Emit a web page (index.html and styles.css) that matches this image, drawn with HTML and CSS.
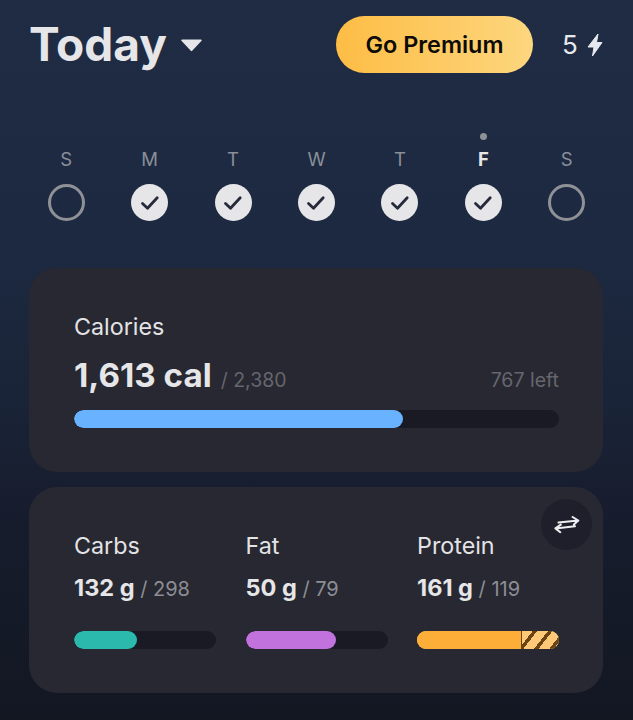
FILE: index.html
```html
<!DOCTYPE html>
<html lang="en">
<head>
<meta charset="utf-8">
<title>Today</title>
<link rel="stylesheet" href="styles.css">
</head>
<body>
<main class="screen">
  <header class="top">
    <div class="title-group">
      <h1 class="title">Today</h1>
      <svg class="caret" width="23" height="14" viewBox="0 0 23 14"><path d="M2 1.5h19a.8.8 0 0 1 .6 1.3l-9.4 10a1 1 0 0 1-1.4 0l-9.4-10A.8.8 0 0 1 2 1.5z" fill="#e6e6e8"/></svg>
    </div>
    <button class="premium">Go Premium</button>
    <div class="streak">
      <span>5</span>
      <svg class="bolt" width="16" height="24" viewBox="0 0 16 24"><path d="M11 1 1 14h6L5.5 23 15 9.5H9.5z" fill="#e6e9ee" stroke="#e6e9ee" stroke-width="1" stroke-linejoin="round"/></svg>
    </div>
  </header>

  <section class="week">
    <div class="day"><i class="today-dot off"></i><span class="letter">S</span><span class="ring"></span></div>
    <div class="day"><i class="today-dot off"></i><span class="letter">M</span><span class="done"><svg width="20" height="16" viewBox="0 0 20 16"><path d="M2.5 8.5 7.5 13.2 17.2 2.8" class="tick"/></svg></span></div>
    <div class="day"><i class="today-dot off"></i><span class="letter">T</span><span class="done"><svg width="20" height="16" viewBox="0 0 20 16"><path d="M2.5 8.5 7.5 13.2 17.2 2.8" class="tick"/></svg></span></div>
    <div class="day"><i class="today-dot off"></i><span class="letter">W</span><span class="done"><svg width="20" height="16" viewBox="0 0 20 16"><path d="M2.5 8.5 7.5 13.2 17.2 2.8" class="tick"/></svg></span></div>
    <div class="day"><i class="today-dot off"></i><span class="letter">T</span><span class="done"><svg width="20" height="16" viewBox="0 0 20 16"><path d="M2.5 8.5 7.5 13.2 17.2 2.8" class="tick"/></svg></span></div>
    <div class="day"><i class="today-dot"></i><span class="letter current">F</span><span class="done"><svg width="20" height="16" viewBox="0 0 20 16"><path d="M2.5 8.5 7.5 13.2 17.2 2.8" class="tick"/></svg></span></div>
    <div class="day"><i class="today-dot off"></i><span class="letter">S</span><span class="ring"></span></div>
  </section>

  <section class="card calories">
    <div class="label">Calories</div>
    <div class="cal-row">
      <div><strong class="cal-value">1,613 cal</strong><span class="cal-goal">/ 2,380</span></div>
      <span class="cal-left">767 left</span>
    </div>
    <div class="track"><div class="fill fill-blue" style="width:67.8%"></div></div>
  </section>

  <section class="card macros">
    <button class="swap" aria-label="Switch view">
      <svg width="26" height="18" viewBox="0 0 26 18" fill="none" stroke="#eceef0" stroke-width="2" stroke-linecap="round" stroke-linejoin="round"><path d="M4.5 6.6 24.3 4.6M18.6 1l5.7 3.6-4.4 4M21 10.2 1.4 12.4M6.8 8.6l-5.4 3.8 4.9 3.8"/></svg>
    </button>
    <div class="macro">
      <div class="label">Carbs</div>
      <div class="macro-value"><strong>132 g</strong><span class="macro-goal"> / 298</span></div>
      <div class="track"><div class="fill fill-teal" style="width:44.4%"></div></div>
    </div>
    <div class="macro">
      <div class="label">Fat</div>
      <div class="macro-value"><strong>50 g</strong><span class="macro-goal"> / 79</span></div>
      <div class="track"><div class="fill fill-purple" style="width:63.4%"></div></div>
    </div>
    <div class="macro">
      <div class="label">Protein</div>
      <div class="macro-value"><strong>161 g</strong><span class="macro-goal"> / 119</span></div>
      <div class="track track-over">
        <div class="over-solid"></div>
        <div class="over-stripes"></div>
      </div>
    </div>
  </section>
</main>
</body>
</html>
```

FILE: styles.css
```css
* { box-sizing: border-box; }

html, body {
  margin: 0;
  height: 100%;
}

body {
  font-family: Inter, "Liberation Sans", sans-serif;
  background: linear-gradient(180deg, #1f2c44 0%, #1c2940 35%, #1a2438 55%, #171d2e 70%, #131722 100%);
  color: #e6e6e8;
  overflow: hidden;
}

.screen {
  width: 633px;
  height: 720px;
  padding-top: 16px;
}

/* Header */
.top {
  display: flex;
  align-items: center;
  height: 57px;
  padding-left: 29px;
}

.title-group {
  flex: none;
  display: flex;
  align-items: center;
  gap: 13px;
  width: 307px;
}

.title {
  margin: 0;
  font-size: 46px;
  line-height: 57px;
  font-weight: 700;
  color: #e6e6e8;
}

.premium {
  flex: none;
  width: 197px;
  height: 57px;
  border: 0;
  border-radius: 29px;
  background: linear-gradient(90deg, #fdbd45 0%, #fdd67e 100%);
  color: #0d0b0a;
  font-family: inherit;
  font-size: 23.4px;
  font-weight: 600;
  padding: 0;
}

.streak {
  display: flex;
  align-items: center;
  gap: 9px;
  margin-left: 29px;
  font-size: 26px;
  font-weight: 400;
  color: #e6e9ee;
}

/* Week */
.week {
  display: grid;
  grid-template-columns: repeat(7, 1fr);
  padding: 0 24.5px;
  margin-top: 60px;
}

.day {
  display: flex;
  flex-direction: column;
  align-items: center;
}

.today-dot {
  width: 7px;
  height: 7px;
  border-radius: 50%;
  background: #8f9197;
}

.today-dot.off { background: transparent; }

.letter {
  margin-top: 8px;
  height: 23px;
  line-height: 23px;
  font-size: 18.5px;
  color: #8a8f99;
}

.letter.current {
  color: #e6e6e8;
  font-weight: 700;
}

.ring, .done {
  margin-top: 13px;
  width: 37px;
  height: 37px;
  border-radius: 50%;
}

.ring { border: 3px solid #8f9196; }

.done {
  display: flex;
  align-items: center;
  justify-content: center;
  background: #e6e6e8;
}

.tick {
  fill: none;
  stroke: #262a3a;
  stroke-width: 2.8;
  stroke-linecap: round;
  stroke-linejoin: round;
}

/* Cards */
.card {
  margin: 0 30px 0 29px;
  border-radius: 28px;
  background: #272831;
}

.label {
  font-size: 23.3px;
  line-height: 26px;
  color: #e3e3e6;
}

.calories {
  height: 204px;
  margin-top: 47px;
  padding: 46px 44px 0 45px;
}

.cal-row {
  display: flex;
  align-items: baseline;
  justify-content: space-between;
  margin-top: 13px;
  height: 44px;
  line-height: 44px;
}

.cal-value {
  font-size: 33.2px;
  font-weight: 700;
  color: #e6e6e8;
}

.cal-goal {
  margin-left: 9px;
}

.cal-goal, .cal-left {
  font-size: 19.5px;
  color: #65666e;
}

.track {
  height: 18px;
  margin-top: 13px;
  border-radius: 9px;
  background: #191a24;
  overflow: hidden;
}

.fill {
  height: 100%;
  border-radius: 9px;
}

.fill-blue { background: #68b2ff; }
.fill-teal { background: #2bb9ad; }
.fill-purple { background: #c272dd; }

.macros {
  position: relative;
  display: grid;
  grid-template-columns: repeat(3, 142px);
  column-gap: 29.5px;
  height: 206px;
  margin-top: 15px;
  padding: 45px 44px 0 45px;
}

.macro .label { line-height: 27px; }

.macro-value {
  margin-top: 14px;
  height: 30px;
  line-height: 30px;
  font-size: 20px;
  color: #8d8e94;
}

.macro-value strong {
  font-size: 23.5px;
  font-weight: 700;
  color: #e6e6e8;
}

.macro-goal { font-size: 20px; }

.macro .track { margin-top: 28px; }

.track-over {
  display: flex;
  background: #fdc877;
}

.over-solid {
  width: 105px;
  background: #fdae38;
  border-right: 1px solid #6a4412;
}

.over-stripes {
  flex: 1;
  background: repeating-linear-gradient(128deg, #fdc877 0 8.5px, #6a4412 8.5px 12px);
}

.swap {
  position: absolute;
  top: 12px;
  right: 11px;
  display: flex;
  align-items: center;
  justify-content: center;
  width: 51px;
  height: 51px;
  padding: 0;
  border: 0;
  border-radius: 50%;
  background: #1e1f2a;
}
```
